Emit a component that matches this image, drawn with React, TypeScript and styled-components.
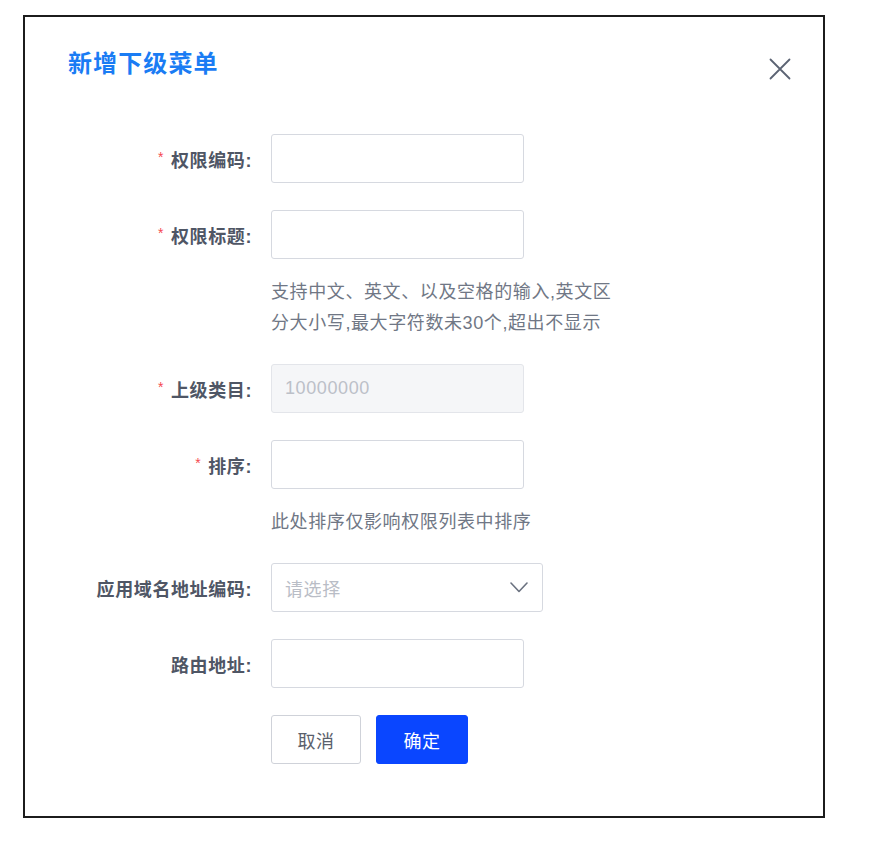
import React from 'react';
import styled, { createGlobalStyle } from 'styled-components';

const GlobalStyle = createGlobalStyle`
    html, body {
        margin: 0;
        padding: 0;
        background: #ffffff;
    }
    body {
        font-family: "Liberation Sans", "Noto Sans CJK SC", Arial, sans-serif;
    }
`

const Page = styled.div`
    padding: 15px 0 0 23px;
`

const Modal = styled.div`
    width: 798px;
    height: 799px;
    border: 2px solid #1c1c1c;
    background: #ffffff;
    box-sizing: content-box;
`

const Header = styled.div`
    display: flex;
    align-items: center;
    justify-content: space-between;
    padding: 32px 31px 0 43px;
    height: 30px;
`

const Title = styled.h2`
    margin: 0;
    font-size: 24px;
    font-weight: 700;
    color: #1a7cf4;
    letter-spacing: 1.1px;
    line-height: 30px;
`

const CloseButton = styled.button`
    border: none;
    background: transparent;
    padding: 0;
    width: 24px;
    height: 24px;
    display: flex;
    align-items: center;
    justify-content: center;
    cursor: pointer;
    margin-top: 10px;
`

const Form = styled.form`
    display: flex;
    flex-direction: column;
    padding-top: 55px;
`

const Item = styled.div`
    display: grid;
    grid-template-columns: 227px 1fr;
    column-gap: 19px;
    margin-bottom: 27px;
`

const Label = styled.label`
    display: flex;
    align-items: center;
    justify-content: flex-end;
    height: 49px;
    font-size: 18px;
    font-weight: 700;
    color: #4f5665;
    letter-spacing: 0.6px;
    white-space: nowrap;
`

const Star = styled.span`
    color: #f5494f;
    font-size: 14px;
    font-weight: 400;
    margin-right: 7px;
    position: relative;
    top: -2px;
`

const Control = styled.div`
    display: flex;
    flex-direction: column;
`

const Input = styled.input`
    box-sizing: border-box;
    width: 253px;
    height: 49px;
    border: 1px solid #d6d9e0;
    border-radius: 3px;
    padding: 0 13px;
    font-family: inherit;
    font-size: 18px;
    letter-spacing: 0.6px;
    color: #4f5665;
    background: #ffffff;
    outline: none;

    &:disabled {
        background: #f5f6f8;
        color: #bcc0c8;
        border-color: #e3e5ea;
    }
`

const Help = styled.div`
    margin: 18px 0 -2px;
    font-size: 18px;
    line-height: 31px;
    color: #707785;
    letter-spacing: 0.6px;
    white-space: nowrap;
`

const Select = styled.div`
    box-sizing: border-box;
    width: 272px;
    height: 49px;
    border: 1px solid #d6d9e0;
    border-radius: 3px;
    padding: 0 14px 0 13px;
    display: flex;
    align-items: center;
    justify-content: space-between;
    cursor: pointer;
`

const Placeholder = styled.span`
    font-size: 18px;
    color: #b9bdc6;
    letter-spacing: 0.6px;
`

const Actions = styled.div`
    display: flex;
    gap: 15px;
`

const Button = styled.button<{ $primary?: boolean }>`
    box-sizing: border-box;
    height: 49px;
    width: ${p => p.$primary ? 92 : 90}px;
    border-radius: 3px;
    border: 1px solid ${p => p.$primary ? '#0a46ff' : '#cfd2d9'};
    background: ${p => p.$primary ? '#0a46ff' : '#ffffff'};
    color: ${p => p.$primary ? '#ffffff' : '#5a606c'};
    font-family: inherit;
    font-size: 18px;
    letter-spacing: 0.6px;
    cursor: pointer;
`

type FieldProps = {
    label: string
    required?: boolean
    children: React.ReactNode
}

const Field: React.FC<FieldProps> = ({ label, required, children }) => (
    <Item>
        <Label>
            {required && <Star>*</Star>}
            {label}:
        </Label>
        <Control>{children}</Control>
    </Item>
)

const App: React.FC = () => {
    return (
        <Page>
            <GlobalStyle />
            <Modal>
                <Header>
                    <Title>新增下级菜单</Title>
                    <CloseButton type="button" aria-label="close">
                        <svg width="22" height="22" viewBox="0 0 22 22" fill="none">
                            <path d="M1.5 1.5 L20.5 20.5 M20.5 1.5 L1.5 20.5" stroke="#5b6373" strokeWidth="1.8" strokeLinecap="round" />
                        </svg>
                    </CloseButton>
                </Header>
                <Form onSubmit={e => e.preventDefault()}>
                    <Field label="权限编码" required>
                        <Input />
                    </Field>
                    <Field label="权限标题" required>
                        <Input />
                        <Help>
                            支持中文、英文、以及空格的输入,英文区<br />
                            分大小写,最大字符数未30个,超出不显示
                        </Help>
                    </Field>
                    <Field label="上级类目" required>
                        <Input disabled value="10000000" readOnly />
                    </Field>
                    <Field label="排序" required>
                        <Input />
                        <Help>此处排序仅影响权限列表中排序</Help>
                    </Field>
                    <Field label="应用域名地址编码">
                        <Select>
                            <Placeholder>请选择</Placeholder>
                            <svg width="18" height="11" viewBox="0 0 18 11" fill="none">
                                <path d="M1 1 L9 9.5 L17 1" stroke="#6b7280" strokeWidth="1.6" strokeLinecap="round" strokeLinejoin="round" />
                            </svg>
                        </Select>
                    </Field>
                    <Field label="路由地址">
                        <Input />
                    </Field>
                    <Item>
                        <span />
                        <Actions>
                            <Button type="button">取消</Button>
                            <Button type="submit" $primary>确定</Button>
                        </Actions>
                    </Item>
                </Form>
            </Modal>
        </Page>
    )
}

export default App;
